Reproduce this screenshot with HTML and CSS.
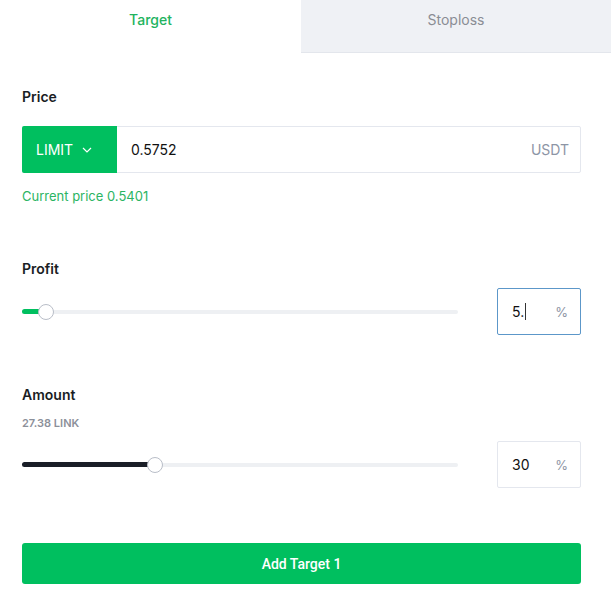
FILE: index.html
```html
<!DOCTYPE html>
<html>
<head>
<meta charset="utf-8">
<link rel="stylesheet" href="styles.css">
</head>
<body>
<div class="tabs">
  <div class="tab active">Target</div>
  <div class="tab">Stoploss</div>
</div>
<div class="content">
  <div class="label price-label">Price</div>
  <div class="price-row">
    <div class="limit">LIMIT
      <svg width="10" height="6" viewBox="0 0 10 6"><path d="M1 1 L5 5 L9 1" fill="none" stroke="#fff" stroke-width="1.2"/></svg>
    </div>
    <div class="price-value">0.5752</div>
    <div class="unit">USDT</div>
  </div>
  <div class="current">Current price 0.5401</div>

  <div class="label profit-label">Profit</div>
  <div class="slider-row">
    <div class="slider">
      <div class="track"></div>
      <div class="fill green" style="width:22px"></div>
      <div class="knob" style="left:16px"></div>
    </div>
    <div class="pct focused"><span class="val">5.<span class="caret"></span></span><span class="sign">%</span></div>
  </div>

  <div class="label amount-label">Amount</div>
  <div class="sub">27.38 LINK</div>
  <div class="slider-row amount-row">
    <div class="slider">
      <div class="track"></div>
      <div class="fill dark" style="width:134px"></div>
      <div class="knob" style="left:125px"></div>
    </div>
    <div class="pct"><span class="val">30</span><span class="sign">%</span></div>
  </div>

  <button class="add">Add Target 1</button>
</div>
</body>
</html>
```
FILE: styles.css
```css
* { box-sizing: border-box; }
body {
  margin: 0;
  background: #fff;
  font-family: Inter, "Open Sans", sans-serif;
  color: #1c1f26;
  width: 611px;
}
.tabs {
  display: flex;
  height: 53px;
}
.tab {
  flex: 0 0 310px;
  text-align: center;
  padding-top: 11px;
  font-size: 14px;
  color: #8a8d94;
  background: #eff1f5;
  border-bottom: 1px solid #e3e6ec;
}
.tab.active {
  flex: 0 0 301px;
  background: #fff;
  color: #22b35e;
  font-weight: 500;
  border-bottom: none;
}
.content {
  padding: 0 30px 0 22px;
}
.label {
  font-size: 14px;
  font-weight: 600;
  color: #1a1d24;
  line-height: 18px;
}
.price-label { margin-top: 35px; }
.price-row {
  margin-top: 20px;
  display: flex;
  align-items: center;
  height: 47px;
  border: 1px solid #e4e7ee;
  border-radius: 2px;
}
.limit {
  height: 47px;
  margin: -1px 0 -1px -1px;
  width: 95px;
  background: #00bf5f;
  color: #fff;
  font-size: 14px;
  display: flex;
  align-items: center;
  padding-left: 14px;
  gap: 9px;
  border-radius: 2px 0 0 2px;
}
.price-value {
  flex: 1;
  padding-left: 14px;
  font-size: 14px;
  color: #111;
}
.unit {
  padding-right: 11px;
  font-size: 14px;
  color: #8d95a5;
}
.current {
  margin-top: 15px;
  font-size: 13px;
  color: #2bb463;
}
.profit-label { margin-top: 56px; }
.slider-row {
  display: flex;
  align-items: center;
  justify-content: space-between;
  margin-top: 10px;
}
.slider {
  position: relative;
  width: 436px;
  height: 18px;
}
.track {
  position: absolute;
  left: 0; right: 0; top: 7px;
  height: 4px;
  background: #eef0f3;
  border-radius: 2px;
}
.fill {
  position: absolute;
  left: 0; top: 6px;
  height: 5px;
  border-radius: 3px;
}
.fill.green { background: #00bf5f; }
.fill.dark { background: #1a1e27; }
.knob {
  position: absolute;
  top: 1px;
  width: 16px; height: 16px;
  border-radius: 50%;
  background: #fff;
  border: 1px solid #b9bec8;
}
.pct {
  width: 84px;
  height: 47px;
  border: 1px solid #e4e7ee;
  border-radius: 2px;
  display: flex;
  align-items: center;
  justify-content: space-between;
  padding: 0 12px 0 14px;
  font-size: 14px;
}
.pct.focused { border-color: #5c97c9; }
.val { color: #111; display: flex; align-items: center; }
.caret {
  display: inline-block;
  width: 1px;
  height: 17px;
  background: #333;
  margin-left: 1px;
}
.sign { color: #8d95a5; font-size: 13px; }
.amount-label { margin-top: 51px; }
.sub {
  margin-top: 12px;
  font-size: 11px;
  font-weight: 600;
  color: #8c909a;
}
.amount-row { margin-top: 11px; }
.add {
  display: block;
  margin-top: 55px;
  width: 559px;
  height: 41px;
  border: none;
  border-radius: 3px;
  background: #00bf5f;
  color: #fff;
  font-family: Roboto, sans-serif;
  font-size: 14px;
  font-weight: 500;
}
```
